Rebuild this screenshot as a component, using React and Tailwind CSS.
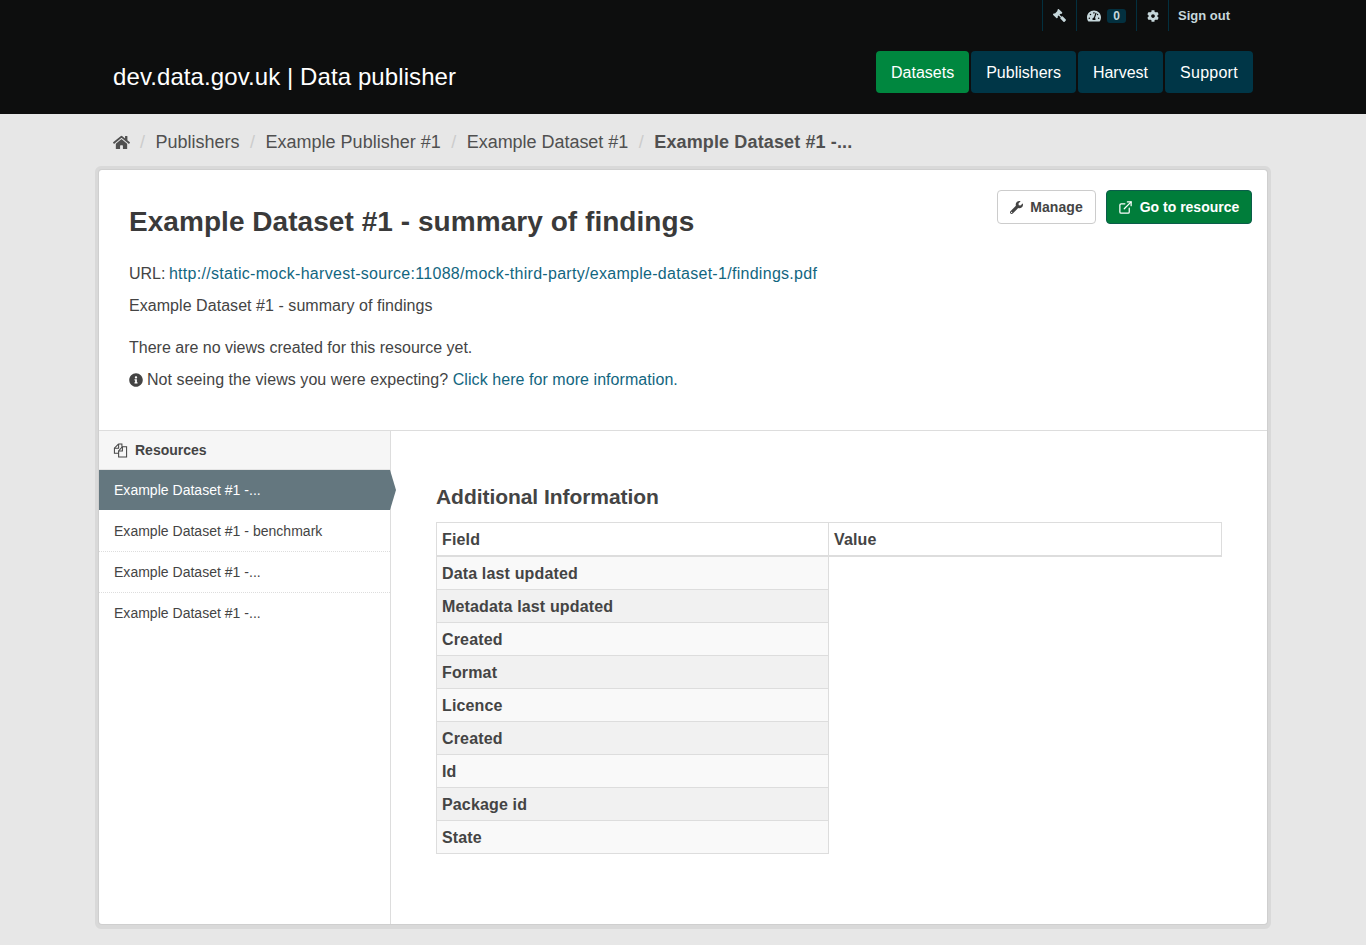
import React from "react";
import { FaHome, FaGavel, FaTachometerAlt, FaCog, FaWrench, FaInfoCircle } from "react-icons/fa";
import { FiExternalLink } from "react-icons/fi";

const Sep = () => <span className="text-[#ccc] text-[18px] px-[10.5px]">/</span>;
const rows = ["Data last updated", "Metadata last updated", "Created", "Format", "Licence", "Created", "Id", "Package id", "State"];

function NavBtn({ children, active, wide }) {
  return (
    <a className={`h-[42px] pt-[2px] flex items-center justify-center rounded-[4px] text-white text-[16px] ${wide ? "w-[88px] tracking-[0.25px]" : "px-[15px]"} ${active ? "bg-[#00873f]" : "bg-[#003647]"}`}>{children}</a>
  );
}

function FilesIcon() {
  return (
    <svg viewBox="0 0 16 16" className="w-[15px] h-[15px]" fill="none" stroke="#444" strokeWidth="1.1">
      <path d="M6 1H9.5V4M6 1L1.5 5.5V11H6" />
      <path d="M6 1V5.5H1.5" />
      <path d="M10 4H14.5V15H6V8.5L10 4Z" />
      <path d="M10 4V8.5H6" />
    </svg>
  );
}

export default function App() {
  return (
    <div className="min-h-[945px] bg-[#e7e7e7] text-[#444] font-['Liberation_Sans',Arial,sans-serif]">
      <header className="h-[114px] bg-[#0d0e0e]">
        <div className="h-[31px] flex justify-end pr-[120px] text-[#c6d7db] text-[13px] font-bold">
          <div className="flex h-full">
            <a className="w-[34px] border-l border-[#03303f] flex items-center justify-center"><FaGavel className="text-[13px] -scale-x-100" /></a>
            <a className="w-[60px] border-l border-[#03303f] flex items-center pl-[10px]">
              <FaTachometerAlt className="text-[14px]" />
              <span className="ml-[6px] w-[19px] h-[14px] rounded-[3px] bg-[#03303f] text-[12px] flex items-center justify-center">0</span>
            </a>
            <a className="w-[32px] border-l border-[#03303f] flex items-center justify-center"><FaCog className="text-[12px]" /></a>
            <a className="w-[78px] border-l border-[#03303f] flex items-center pl-[9px] whitespace-nowrap">Sign out</a>
          </div>
        </div>
        <div className="mt-[20px] pl-[113px] pr-[113px] flex items-start justify-between">
          <a className="text-white text-[24px] leading-[42px] mt-[5px] tracking-[0.09px]">dev.data.gov.uk | Data publisher</a>
          <nav className="flex gap-[2px]">
            <NavBtn active>Datasets</NavBtn>
            <NavBtn>Publishers</NavBtn>
            <NavBtn>Harvest</NavBtn>
            <NavBtn wide>Support</NavBtn>
          </nav>
        </div>
      </header>

      <div className="h-[52px] pt-[4px] pl-[113px] flex items-center text-[18px] text-[#505050]">
        <FaHome className="text-[17px] mr-[-0.5px]" />
        <Sep /><a>Publishers</a><Sep /><a>Example Publisher #1</a><Sep /><a className="tracking-[-0.03px]">Example Dataset #1</a><Sep />
        <a className="font-bold tracking-[0.13px]">Example Dataset #1 -...</a>
      </div>

      <main className="mx-[95px] border-x-4 border-t-4 border-b-[5px] border-[#d9d9d9] rounded-[6px] bg-white h-[763px]">
        <div className="h-full flex flex-col rounded-[3px] shadow-[0_0_0_1px_#cfcfcf]">
          <section className="relative h-[261px] pt-[34px] px-[30px] border-b border-[#ddd]">
            <div className="absolute right-[15px] top-[20px] flex gap-[10px]">
              <a className="h-[34px] w-[99px] flex items-center justify-center gap-[7px] rounded-[4px] border border-[#ccc] text-[14px] font-bold text-[#444] tracking-[0.1px]"><FaWrench className="text-[13px]" />Manage</a>
              <a className="h-[34px] w-[146px] flex items-center justify-center gap-[7px] rounded-[4px] border border-[#0b5d4a] bg-[#007d3a] text-[14px] font-bold text-white"><FiExternalLink className="text-[15px] ml-[-1px]" />Go to resource</a>
            </div>
            <h1 className="text-[28px] leading-[36px] font-bold text-[#3a3a3a] tracking-[0.05px]">Example Dataset #1 - summary of findings</h1>
            <p className="mt-[23px] text-[16px] leading-[22px]">URL: <a className="text-[#12667f] tracking-[0.29px] ml-[-1px]">http://static-mock-harvest-source:11088/mock-third-party/example-dataset-1/findings.pdf</a></p>
            <p className="mt-[10px] text-[16px] leading-[22px] tracking-[0.05px]">Example Dataset #1 - summary of findings</p>
            <p className="mt-[20px] text-[16px] leading-[22px]">There are no views created for this resource yet.</p>
            <p className="mt-[10px] text-[16px] leading-[22px] flex items-center tracking-[0.06px]"><FaInfoCircle className="text-[14px] mr-[4px]" /><span>Not seeing the views you were expecting? <a className="text-[#12667f]">Click here for more information.</a></span></p>
          </section>
          <div className="flex flex-1">
            <aside className="w-[292px] border-r border-[#ddd]">
              <div className="h-[39px] bg-[#f6f6f6] border-b border-[#e5e5e5] pl-[14px] flex items-center gap-[7px] text-[14px] font-bold"><FilesIcon />Resources</div>
              <a className="relative h-[40px] mb-px bg-[#64777f] text-white text-[14px] pl-[15px] flex items-center tracking-[0.02px]">
                Example Dataset #1 -...
                <span className="absolute top-0 right-[-6px] h-full w-[6px] bg-[#64777f] [clip-path:polygon(0_0,100%_50%,0_100%)]"></span>
              </a>
              {["Example Dataset #1 - benchmark", "Example Dataset #1 -...", "Example Dataset #1 -..."].map((t, i) => (
                <a key={i} className={`h-[41px] pl-[15px] flex items-center text-[14px] tracking-[0.02px] ${i < 2 ? "border-b border-dotted border-[#ddd]" : ""}`}>{t}</a>
              ))}
            </aside>
            <section className="flex-1 pl-[45px] pr-[45px] pt-[52px]">
              <h2 className="text-[21px] leading-[28px] font-bold text-[#444] tracking-[-0.05px]">Additional Information</h2>
              <table className="mt-[11px] w-[786px] table-fixed border-collapse text-[16px] text-left tracking-[0.15px]">
                <thead>
                  <tr className="h-[33px]">
                    <th className="w-[392px] border border-[#ddd] border-b-2 px-[5px] pt-[3px] font-bold">Field</th>
                    <th className="border border-[#ddd] border-b-2 px-[5px] pt-[3px] font-bold">Value</th>
                  </tr>
                </thead>
                <tbody>
                  {rows.map((r, i) => (
                    <tr key={i} className={i === 0 ? "h-[34px]" : "h-[33px]"}>
                      <th className={`border border-[#ddd] px-[5px] pt-[2px] font-bold ${i % 2 ? "bg-[#f1f1f1]" : "bg-[#f9f9f9]"}`}>{r}</th>
                    </tr>
                  ))}
                </tbody>
              </table>
            </section>
          </div>
        </div>
      </main>
    </div>
  );
}
